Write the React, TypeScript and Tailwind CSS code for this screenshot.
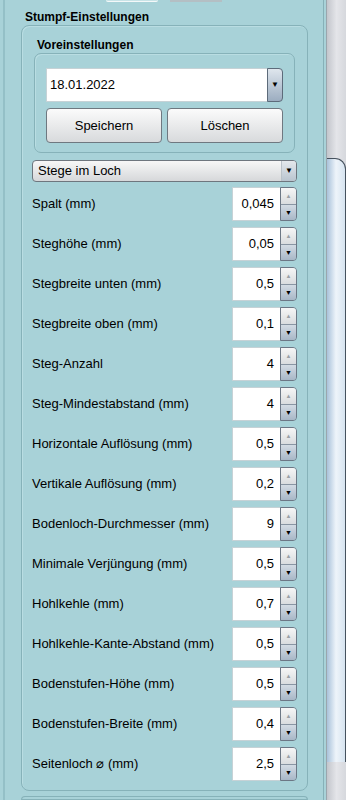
const rows: [string, string][] = [
  ["Spalt (mm)", "0,045"],
  ["Steghöhe (mm)", "0,05"],
  ["Stegbreite unten (mm)", "0,5"],
  ["Stegbreite oben (mm)", "0,1"],
  ["Steg-Anzahl", "4"],
  ["Steg-Mindestabstand (mm)", "4"],
  ["Horizontale Auflösung (mm)", "0,5"],
  ["Vertikale Auflösung (mm)", "0,2"],
  ["Bodenloch-Durchmesser (mm)", "9"],
  ["Minimale Verjüngung (mm)", "0,5"],
  ["Hohlkehle (mm)", "0,7"],
  ["Hohlkehle-Kante-Abstand (mm)", "0,5"],
  ["Bodenstufen-Höhe (mm)", "0,5"],
  ["Bodenstufen-Breite (mm)", "0,4"],
  ["Seitenloch ⌀ (mm)", "2,5"],
];

function Spinner({ value }: { value: string }) {
  return (
    <div className="flex h-[34px] w-[65px]">
      <div className="flex flex-1 items-center justify-end border border-r-0 border-[#c6d2d6] bg-white pr-[6px] text-[13px] text-black">
        {value}
      </div>
      <div className="flex w-[17px] flex-col overflow-hidden rounded-r-[4px] border border-[#6c7785]">
        <div className="flex flex-1 items-center justify-center bg-gradient-to-b from-[#f6f6f6] to-[#d9dcdf] text-[6px] leading-none text-[#9aa0a6]">
          ▲
        </div>
        <div className="flex flex-1 items-center justify-center border-t border-[#8895a3] bg-gradient-to-b from-[#d3dbe4] to-[#a8b7c7] text-[7px] leading-none text-black">
          ▼
        </div>
      </div>
    </div>
  );
}

export default function App() {
  return (
    <div className="relative flex h-[800px] w-[346px] overflow-hidden bg-[#a8d2d8] font-['Liberation_Sans',Arial,sans-serif] text-black">
      {/* tab remnants at the top */}
      <div className="absolute left-[106px] top-0 h-[2px] w-[52px] rounded-b-[2px] border-b border-[#f4f8f9] bg-[#c8e3e7]" />
      <div className="absolute left-[170px] top-0 h-[2px] w-[52px] bg-[#b4bfc4]" />

      <div className="ml-[3px] flex h-full w-[321px] flex-col border-l-2 border-r border-l-[#94c0c7] border-r-[#86b1b8]">
        <div className="pl-[20px] pt-[10px] text-[12px] font-bold leading-[14px]">
          Stumpf-Einstellungen
        </div>

        <div className="ml-[16px] mt-[1px] flex h-[766px] w-[287px] flex-col rounded-[8px] border border-[#86b2b9] px-[10px] pb-[9px] shadow-[inset_1px_1px_0_#b9dde2]">
          <div className="pl-[5px] pt-[12px] text-[12px] font-bold leading-[14px]">
            Voreinstellungen
          </div>

          <div className="mx-[2px] mt-[1px] flex h-[100px] flex-col rounded-[7px] border border-[#86b2b9] px-[11px] pt-[14px] shadow-[inset_1px_1px_0_#b9dde2]">
            <div className="flex h-[34px]">
              <div className="flex flex-1 items-center border border-r-0 border-[#c6d2d6] bg-white pl-[3px] text-[13px]">
                18.01.2022
              </div>
              <div className="flex w-[16px] items-center justify-center rounded-r-[4px] border border-[#5d6b7a] bg-gradient-to-b from-[#dfe6ed] to-[#9cadc0] text-[8px] leading-none">
                ▼
              </div>
            </div>
            <div className="mt-[6px] flex gap-[5px]">
              {["Speichern", "Löschen"].map((t) => (
                <div
                  key={t}
                  className="flex h-[35px] flex-1 items-center justify-center rounded-[4px] border border-[#6f7880] bg-gradient-to-b from-[#fbfbfb] to-[#d8dadc] text-[13px]"
                >
                  {t}
                </div>
              ))}
            </div>
          </div>

          <div className="mt-[7px] flex h-[22px] overflow-hidden rounded-[4px] border border-[#6e767e] bg-gradient-to-b from-[#f7f7f7] to-[#d6d8da]">
            <div className="flex flex-1 items-center pl-[5px] text-[13px]">Stege im Loch</div>
            <div className="flex w-[15px] items-center justify-center border-l border-[#b9c1c8] bg-gradient-to-b from-[#e4e8ec] to-[#b9c4cf] text-[8px] leading-none">
              ▼
            </div>
          </div>

          <div className="mt-[5px] flex flex-col gap-[6px]">
            {rows.map(([label, value]) => (
              <div key={label} className="flex items-center justify-between">
                <span className="text-[13px]">{label}</span>
                <Spinner value={value} />
              </div>
            ))}
          </div>
        </div>

        <div className="ml-[16px] mt-[5px] h-[20px] w-[287px] rounded-t-[8px] border border-[#86b2b9]" />
      </div>

      {/* scrollbar */}
      <div className="ml-[2px] flex w-[20px] flex-col border-l border-[#9aa6ad] bg-gradient-to-r from-[#c3c6cc] via-[#e4e5e9] to-[#d6d8dd]">
        <div className="h-[158px]" />
        <div className="h-[604px] rounded-tr-[11px] border-r border-t border-[#46525e] bg-gradient-to-r from-[#a9c2da] via-[#eef4fa] to-[#d7e4f0]" />
        <div className="flex-1" />
      </div>
    </div>
  );
}
